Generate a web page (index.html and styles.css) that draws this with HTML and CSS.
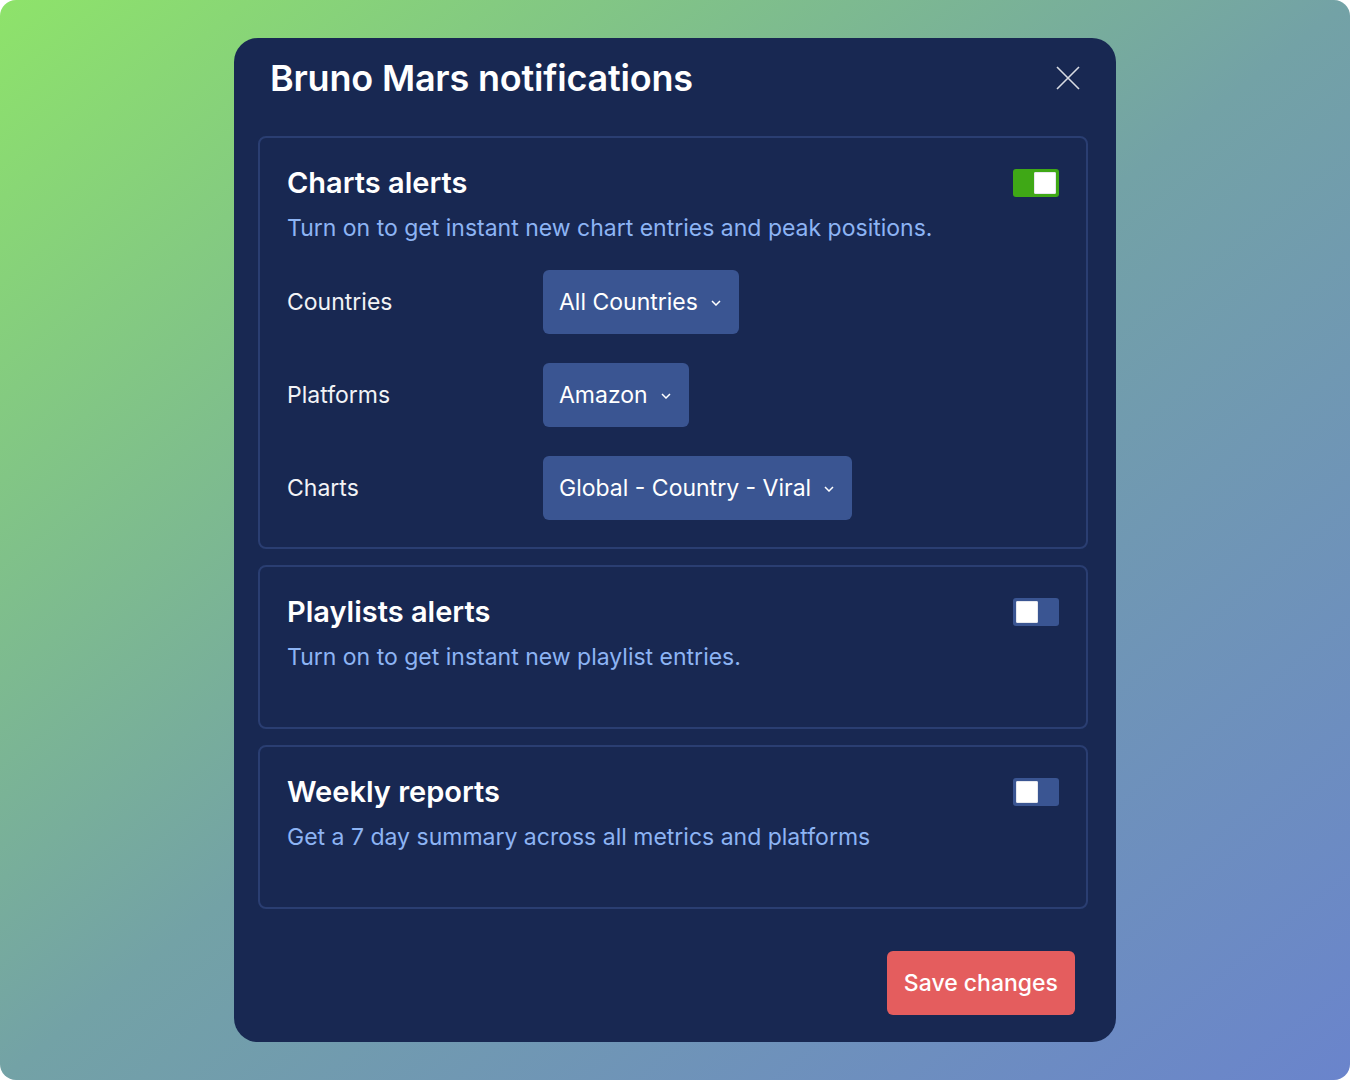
FILE: index.html
```html
<!DOCTYPE html>
<html lang="en">
<head>
<meta charset="utf-8">
<title>Bruno Mars notifications</title>
<link rel="stylesheet" href="styles.css">
</head>
<body>
<div class="page">
  <div class="modal">
    <div class="modal-header">
      <h1 class="modal-title">Bruno Mars notifications</h1>
      <button class="close-btn" aria-label="Close">
        <svg width="24" height="24" viewBox="0 0 24 24"><path d="M1 1 L23 23 M23 1 L1 23" stroke="#d8dbe3" stroke-width="1.6" fill="none"/></svg>
      </button>
    </div>

    <div class="cards">
      <section class="card">
        <div class="card-head">
          <h2 class="card-title">Charts alerts</h2>
          <span class="toggle on"><span class="thumb"></span></span>
        </div>
        <p class="card-desc">Turn on to get instant new chart entries and peak positions.</p>
        <div class="rows">
          <div class="row">
            <span class="row-label">Countries</span>
            <button class="select">All Countries <svg class="chev" width="10" height="6" viewBox="0 0 10 6"><path d="M1 1 L5 5 L9 1" stroke="#fff" stroke-width="1.5" fill="none"/></svg></button>
          </div>
          <div class="row">
            <span class="row-label">Platforms</span>
            <button class="select">Amazon <svg class="chev" width="10" height="6" viewBox="0 0 10 6"><path d="M1 1 L5 5 L9 1" stroke="#fff" stroke-width="1.5" fill="none"/></svg></button>
          </div>
          <div class="row">
            <span class="row-label">Charts</span>
            <button class="select">Global - Country - Viral <svg class="chev" width="10" height="6" viewBox="0 0 10 6"><path d="M1 1 L5 5 L9 1" stroke="#fff" stroke-width="1.5" fill="none"/></svg></button>
          </div>
        </div>
      </section>

      <section class="card card-simple">
        <div class="card-head">
          <h2 class="card-title">Playlists alerts</h2>
          <span class="toggle"><span class="thumb"></span></span>
        </div>
        <p class="card-desc">Turn on to get instant new playlist entries.</p>
      </section>

      <section class="card card-simple">
        <div class="card-head">
          <h2 class="card-title">Weekly reports</h2>
          <span class="toggle"><span class="thumb"></span></span>
        </div>
        <p class="card-desc">Get a 7 day summary across all metrics and platforms</p>
      </section>
    </div>

    <div class="modal-footer">
      <button class="save-btn">Save changes</button>
    </div>
  </div>
</div>
</body>
</html>
```

FILE: styles.css
```css
* { box-sizing: border-box; }

html, body {
  margin: 0;
  padding: 0;
  background: #ffffff;
}

body {
  font-family: Inter, "Noto Sans", "Liberation Sans", sans-serif;
  color: #ffffff;
}

.page {
  width: 1350px;
  height: 1080px;
  border-radius: 16px;
  overflow: hidden;
  background: linear-gradient(to bottom right, #8ee36a 0%, #73a2a6 50%, #6a84cc 100%);
  display: flex;
  justify-content: center;
  padding-top: 38px;
}

.modal {
  width: 882px;
  height: 1004px;
  background: #182852;
  border-radius: 24px;
  padding: 18px 28px 27px 24px;
  display: flex;
  flex-direction: column;
}

.modal-header {
  display: flex;
  align-items: center;
  justify-content: space-between;
  padding-left: 12px;
  height: 44px;
}

.modal-title {
  margin: 0;
  font-size: 36px;
  line-height: 44px;
  font-weight: 600;
  letter-spacing: -0.2px;
}

.close-btn {
  background: none;
  border: 0;
  padding: 0;
  margin-right: 8px;
  width: 24px;
  height: 24px;
  cursor: pointer;
  display: flex;
}

.cards {
  margin-top: 36px;
  display: flex;
  flex-direction: column;
  gap: 16px;
}

.card {
  border: 2px solid #2a3e72;
  border-radius: 8px;
  padding: 28px 27px 27px 27px;
}

.card-simple {
  height: 164px;
}

.card-head {
  display: flex;
  align-items: center;
  justify-content: space-between;
  height: 34px;
}

.card-title {
  margin: 0;
  font-size: 29px;
  line-height: 34px;
  font-weight: 600;
}

.card-desc {
  margin: 12px 0 0;
  font-size: 23px;
  line-height: 33px;
  color: #8db4f4;
}

.toggle {
  width: 46px;
  height: 28px;
  border-radius: 3px;
  background: #3a5592;
  padding: 3px;
  display: flex;
  justify-content: flex-start;
}

.toggle.on {
  background: #3fa816;
  justify-content: flex-end;
}

.thumb {
  width: 22px;
  height: 22px;
  background: #ffffff;
  border-radius: 2px;
  box-shadow: inset 0 0 0 1px #e6e8ee;
}

.rows {
  margin-top: 25px;
  display: flex;
  flex-direction: column;
  gap: 29px;
}

.row {
  display: flex;
  align-items: center;
}

.row-label {
  width: 256px;
  font-size: 23px;
  line-height: 33px;
  color: #f2f3f6;
}

.select {
  height: 64px;
  background: #3a5592;
  border: 0;
  border-radius: 6px;
  color: #ffffff;
  font-family: inherit;
  font-size: 23px;
  padding: 0 18px 0 16px;
  display: flex;
  align-items: center;
  gap: 13px;
  cursor: pointer;
}

.chev {
  margin-top: 1px;
}

.modal-footer {
  margin-top: auto;
  display: flex;
  justify-content: flex-end;
  padding-right: 13px;
}

.save-btn {
  height: 64px;
  background: #e45d5e;
  border: 0;
  border-radius: 6px;
  color: #ffffff;
  font-family: inherit;
  font-size: 23px;
  font-weight: 500;
  padding: 0 17px;
  cursor: pointer;
}
```
